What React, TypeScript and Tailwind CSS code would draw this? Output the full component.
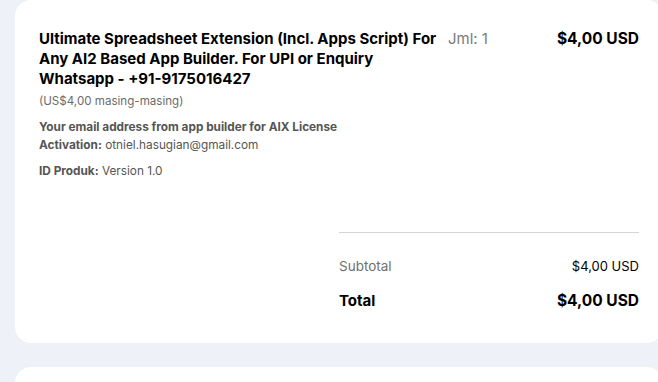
export default function App() {
  return (
    <div
      className="h-[382px] w-[658px] overflow-hidden bg-[#eef1f8]"
      style={{ fontFamily: "Inter, 'Noto Sans', sans-serif" }}
    >
      <div className="ml-[15px] w-[648px] rounded-2xl bg-white px-6 pb-[32px] pt-[29px]">
        <div className="flex items-start">
          <div className="w-[409px]">
            <h3 className="pr-2 text-[15px] font-bold leading-5 text-black">
              Ultimate Spreadsheet Extension (Incl. Apps Script) For Any AI2 Based App Builder. For UPI or Enquiry Whatsapp - +91-9175016427
            </h3>
            <p className="mt-1 text-[11.6px] leading-4 text-[#6b6b6b]">(US$4,00 masing-masing)</p>
          </div>
          <div className="flex-1 text-[15px] leading-5 text-[#7a7a7a]">Jml: 1</div>
          <div className="text-[15.5px] font-bold leading-5 text-black">$4,00 USD</div>
        </div>

        <div className="mt-[9px] w-[304px] text-[11.8px] leading-[18px] text-[#555]">
          <p>
            <span className="font-bold">Your email address from app builder for AIX License Activation:</span>{" "}
            otniel.hasugian@gmail.com
          </p>
          <p className="mt-2">
            <span className="font-bold">ID Produk:</span> Version 1.0
          </p>
        </div>

        <div className="ml-auto mt-[52px] w-1/2 border-t border-[#d4d4d4]">
          <div className="mt-[23px] flex items-center justify-between text-[13px] leading-5">
            <span className="text-[13.5px] text-[#6f6f6f]">Subtotal</span>
            <span className="text-black">$4,00 USD</span>
          </div>
          <div className="mt-[15px] flex items-center justify-between leading-5">
            <span className="text-[15px] font-bold text-black">Total</span>
            <span className="text-[15.5px] font-bold text-black">$4,00 USD</span>
          </div>
        </div>
      </div>
      <div className="ml-[15px] mt-6 h-10 w-[648px] rounded-t-2xl bg-white" />
    </div>
  );
}
